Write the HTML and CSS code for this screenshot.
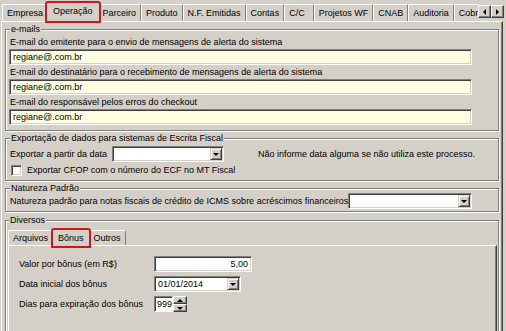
FILE: index.html
```html
<!DOCTYPE html>
<html lang="pt-BR">
<head>
<meta charset="utf-8">
<title>Configuração</title>
<link rel="stylesheet" href="styles.css">
</head>
<body>
<div class="window">
  <div class="tabbar">
    <div class="tablist">
      <div class="tab">Empresa</div>
      <div class="tab active">Operação</div>
      <div class="tab">Parceiro</div>
      <div class="tab">Produto</div>
      <div class="tab">N.F. Emitidas</div>
      <div class="tab">Contas</div>
      <div class="tab tab-wide">C/C</div>
      <div class="tab">Projetos WF</div>
      <div class="tab">CNAB</div>
      <div class="tab">Auditoria</div>
      <div class="tab">Cobrança</div>
    </div>
    <div class="scroller">
      <div class="sbtn"><span class="tri tri-left"></span></div>
      <div class="sbtn"><span class="tri tri-right"></span></div>
    </div>
  </div>

  <div class="page">
    <fieldset class="group g-emails">
      <legend>e-mails</legend>
      <div class="lbl">E-mail do emitente para o envio de mensagens de alerta do sistema</div>
      <div class="edit yellow">regiane@.com.br</div>
      <div class="lbl">E-mail do destinatário para o recebimento de mensagens de alerta do sistema</div>
      <div class="edit yellow">regiane@.com.br</div>
      <div class="lbl">E-mail do responsável pelos erros do checkout</div>
      <div class="edit yellow">regiane@.com.br</div>
    </fieldset>

    <fieldset class="group g-export">
      <legend>Exportação de dados para sistemas de Escrita Fiscal</legend>
      <div class="row">
        <span class="export-label">Exportar a partir da data</span>
        <div class="combo combo-date"><span class="combo-text"></span><span class="drop"><span class="tri tri-down"></span></span></div>
        <span class="hint">Não informe data alguma se não utiliza este processo.</span>
      </div>
      <div class="check-row">
        <span class="checkbox"></span>
        <span class="check-label">Exportar CFOP com o número do ECF no MT Fiscal</span>
      </div>
    </fieldset>

    <fieldset class="group g-natureza">
      <legend>Natureza Padrão</legend>
      <div class="row">
        <span class="nat-label">Natureza padrão para notas fiscais de crédito de ICMS sobre acréscimos financeiros</span>
        <div class="combo combo-nat"><span class="combo-text"></span><span class="drop"><span class="tri tri-down"></span></span></div>
      </div>
    </fieldset>

    <fieldset class="group g-diversos">
      <legend>Diversos</legend>
      <div class="subtabs">
        <div class="tab sub">Arquivos</div>
        <div class="tab sub active">Bônus</div>
        <div class="tab sub">Outros</div>
      </div>
      <div class="subpage">
        <div class="form-row">
          <span class="form-label">Valor por bônus (em R$)</span>
          <div class="edit white num">5,00</div>
        </div>
        <div class="form-row">
          <span class="form-label">Data inicial dos bônus</span>
          <div class="combo combo-bonus"><span class="combo-text">01/01/2014</span><span class="drop"><span class="tri tri-down"></span></span></div>
        </div>
        <div class="form-row">
          <span class="form-label">Dias para expiração dos bônus</span>
          <div class="spin">
            <div class="spin-edit">999</div>
            <div class="spin-btns">
              <span class="spin-btn"><span class="tri tri-up-s"></span></span>
              <span class="spin-btn"><span class="tri tri-down-s"></span></span>
            </div>
          </div>
        </div>
      </div>
    </fieldset>
  </div>
</div>
</body>
</html>
```
FILE: styles.css
```css
* { box-sizing: border-box; }
html, body { margin: 0; padding: 0; }
body {
  width: 506px;
  height: 331px;
  overflow: hidden;
  background: #d4d0c8;
  font-family: "Liberation Sans", Arial, sans-serif;
  font-size: 9px;
  color: #000;
}

.window { padding-left: 1px; }

/* ---------- top tab strip ---------- */
.tabbar {
  display: flex;
  height: 24px;
  position: relative;
  z-index: 2;
}
.tablist {
  flex: 1;
  min-width: 0;
  display: flex;
  align-items: flex-end;
  overflow: hidden;
  height: 24px;
  padding: 0 0 2px 1px;
}
.tab {
  flex: none;
  height: 17px;
  margin-bottom: 1px;
  padding: 0 4px;
  line-height: 17px;
  white-space: nowrap;
  border-top: 1px solid #fff;
  border-left: 1px solid #fff;
  border-right: 1px solid #808080;
  border-radius: 2px 2px 0 0;
  background: #d4d0c8;
}
.tab-wide { padding-right: 8px; padding-left: 4px; }
.tab.active {
  height: 20px;
  margin: 0 -2px;
  padding: 0 6px;
  line-height: 17px;
  position: relative;
  z-index: 3;
  outline: 2px solid #d0151c;
  outline-offset: -1px;
}

.scroller {
  flex: none;
  display: flex;
  padding: 5px 2px 0 0;
}
.sbtn {
  width: 13px;
  height: 13px;
  background: #d4d0c8;
  border: 1px solid;
  border-color: #fff #404040 #404040 #fff;
  box-shadow: inset -1px -1px 0 #808080;
  display: flex;
  align-items: center;
  justify-content: center;
}

.tri { display: block; width: 0; height: 0; }
.tri-left { border-top: 3px solid transparent; border-bottom: 3px solid transparent; border-right: 3px solid #000; }
.tri-right { border-top: 3px solid transparent; border-bottom: 3px solid transparent; border-left: 3px solid #000; }
.tri-down { border-left: 3px solid transparent; border-right: 3px solid transparent; border-top: 3px solid #000; }
.tri-up-s { border-left: 3px solid transparent; border-right: 3px solid transparent; border-bottom: 3px solid #000; }
.tri-down-s { border-left: 3px solid transparent; border-right: 3px solid transparent; border-top: 3px solid #000; }

/* ---------- page ---------- */
.page {
  margin-top: -3px;
  width: 502px;
  height: 320px;
  border-top: 1px solid #fff;
  border-left: 1px solid #fff;
  border-right: 1px solid #404040;
  box-shadow: inset -1px 0 0 #808080;
  padding: 2px 3px 0 3px;
}

.group {
  margin: 0;
  min-width: 0;
  border: 1px solid #808080;
  box-shadow: inset 1px 1px 0 #fff, 1px 1px 0 #fff;
  padding: 1px 3px 5px 3px;
}
.group + .group { margin-top: 2px; }
.group legend {
  padding: 0 1px;
  margin-left: 1px;
  line-height: 10px;
  background: #d4d0c8;
}

.lbl {
  height: 14px;
  line-height: 14px;
  padding-left: 1px;
  white-space: nowrap;
}

.edit {
  height: 16px;
  border: 1px solid;
  border-color: #808080 #fff #fff #808080;
  box-shadow: inset 1px 1px 0 #404040, inset -1px -1px 0 #d4d0c8;
  padding: 0 3px;
  line-height: 14px;
  white-space: nowrap;
}
.yellow { background: #ffffe1; width: 463px; }
.white { background: #fff; }
.num { width: 98px; text-align: right; padding-right: 3px; }

.g-export { padding: 3px 3px 3px 3px; }
.row { display: flex; align-items: center; height: 16px; }
.export-label { width: 103px; padding-left: 1px; white-space: nowrap; }
.hint { margin-left: 34px; white-space: nowrap; }

.combo {
  height: 16px;
  background: #fff;
  border: 1px solid;
  border-color: #808080 #fff #fff #808080;
  box-shadow: inset 1px 1px 0 #404040, inset -1px -1px 0 #d4d0c8;
  padding: 1px;
  display: flex;
}
.combo-text { flex: 1; padding-left: 2px; line-height: 12px; white-space: nowrap; }
.drop {
  flex: none;
  width: 12px;
  height: 12px;
  background: #d4d0c8;
  border: 1px solid;
  border-color: #d4d0c8 #404040 #404040 #d4d0c8;
  box-shadow: inset 1px 1px 0 #fff, inset -1px -1px 0 #808080;
  display: flex;
  align-items: center;
  justify-content: center;
}
.combo-date { width: 112px; }
.combo-nat { width: 124px; }
.combo-bonus { width: 87px; }

.check-row {
  display: flex;
  align-items: center;
  height: 14px;
  margin-top: 1px;
  padding-left: 2px;
}
.checkbox {
  width: 11px;
  height: 11px;
  background: #fff;
  border: 1px solid;
  border-color: #808080 #fff #fff #808080;
  box-shadow: inset 1px 1px 0 #404040, inset -1px -1px 0 #d4d0c8;
}
.check-label { margin-left: 5px; white-space: nowrap; }

.g-natureza { padding: 0 3px 2px 3px; }
.nat-label { width: 339px; padding-left: 1px; white-space: nowrap; }

/* ---------- Diversos ---------- */
.g-diversos { padding: 0 1px 0 2px; height: 140px; margin-top: 3px !important; }
.subtabs {
  display: flex;
  align-items: flex-end;
  height: 21px;
  position: relative;
  z-index: 2;
}
.tab.sub { height: 15px; line-height: 14px; padding: 0 4px; }
.tab.sub.active { height: 18px; line-height: 16px; padding: 0 5px; margin: 0 -1px -1px -1px; }
.subpage {
  margin-top: -1px;
  height: 100px;
  border-top: 1px solid #fff;
  border-left: 1px solid #fff;
  border-right: 1px solid #404040;
  box-shadow: inset -1px 0 0 #808080;
  padding: 10px 0 0 10px;
}
.form-row {
  display: flex;
  align-items: center;
  height: 16px;
  margin-bottom: 4px;
}
.form-label { width: 135px; white-space: nowrap; }

.spin { display: flex; width: 35px; height: 16px; }
.spin-edit {
  width: 19px;
  height: 16px;
  background: #fff;
  border: 1px solid;
  border-color: #808080 transparent #fff #808080;
  box-shadow: inset 1px 1px 0 #404040;
  padding-left: 2px;
  line-height: 14px;
}
.spin-btns { display: flex; flex-direction: column; width: 14px; height: 16px; }
.spin-btn {
  height: 8px;
  background: #d4d0c8;
  border: 1px solid;
  border-color: #fff #404040 #404040 #fff;
  box-shadow: inset -1px -1px 0 #808080;
  display: flex;
  align-items: center;
  justify-content: center;
}
```
